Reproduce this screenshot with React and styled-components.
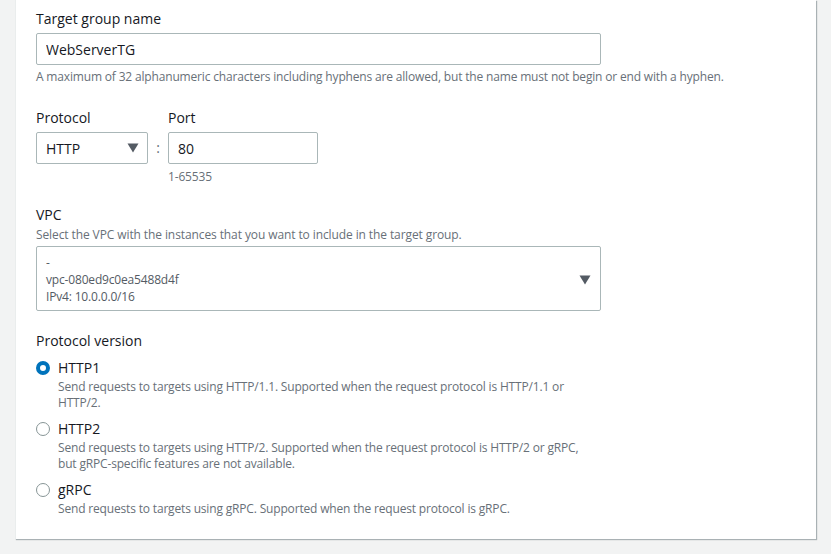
import React, { useState } from 'react'
import styled, { createGlobalStyle } from 'styled-components'

const GlobalStyle = createGlobalStyle`
  html, body {
    margin: 0;
    padding: 0;
    background: #f2f3f3;
    font-family: "Open Sans", "Noto Sans", Arial, sans-serif;
    color: #16191f;
  }
`

const versions = [
  {
    id: 'HTTP1',
    label: 'HTTP1',
    desc: 'Send requests to targets using HTTP/1.1. Supported when the request protocol is HTTP/1.1 or HTTP/2.',
  },
  {
    id: 'HTTP2',
    label: 'HTTP2',
    desc: 'Send requests to targets using HTTP/2. Supported when the request protocol is HTTP/2 or gRPC, but gRPC-specific features are not available.',
  },
  {
    id: 'gRPC',
    label: 'gRPC',
    desc: 'Send requests to targets using gRPC. Supported when the request protocol is gRPC.',
  },
]

function Caret() {
  return (
    <svg width="12" height="10" viewBox="0 0 12 10">
      <path d="M0.5 0.5 L11.5 0.5 L6 9.5 Z" fill="#545b64" />
    </svg>
  )
}

function App() {
  const [version, setVersion] = useState('HTTP1')

  return (
    <>
      <GlobalStyle />
      <Page>
        <Card>
          <Field>
            <Label>Target group name</Label>
            <TextInput wide defaultValue="WebServerTG" />
            <Hint>
              A maximum of 32 alphanumeric characters including hyphens are allowed, but the name must not begin or end with a hyphen.
            </Hint>
          </Field>

          <Row>
            <Field>
              <Label>Protocol</Label>
              <Select>
                <span>HTTP</span>
                <Caret />
              </Select>
            </Field>
            <Colon>:</Colon>
            <Field>
              <Label>Port</Label>
              <TextInput defaultValue="80" width="150px" />
              <SmallHint>1-65535</SmallHint>
            </Field>
          </Row>

          <Field>
            <Label>VPC</Label>
            <Description>Select the VPC with the instances that you want to include in the target group.</Description>
            <VpcSelect>
              <VpcText>
                <VpcLine>-</VpcLine>
                <VpcLine>vpc-080ed9c0ea5488d4f</VpcLine>
                <VpcLine>IPv4: 10.0.0.0/16</VpcLine>
              </VpcText>
              <Caret />
            </VpcSelect>
          </Field>

          <Field>
            <Label>Protocol version</Label>
            <RadioList>
              {versions.map(v => (
                <RadioItem key={v.id} onClick={() => setVersion(v.id)}>
                  <Radio checked={version === v.id} />
                  <RadioBody>
                    <RadioLabel>{v.label}</RadioLabel>
                    <RadioDesc>{v.desc}</RadioDesc>
                  </RadioBody>
                </RadioItem>
              ))}
            </RadioList>
          </Field>
        </Card>
      </Page>
    </>
  )
}

export default App

const Page = styled.div`
  width: 831px;
  height: 554px;
  overflow: hidden;
  padding: 0 15px;
  box-sizing: border-box;
`

const Card = styled.div`
  width: 801px;
  box-sizing: border-box;
  background: #fff;
  border-left: 1px solid #eaeded;
  box-shadow: 1px 1px 1px 0 rgba(0, 28, 36, 0.3);
  padding: 10px 20px 22px 20px;
  display: flex;
  flex-direction: column;
  gap: 21px;
`

const Field = styled.div`
  display: flex;
  flex-direction: column;
`

const Label = styled.div`
  font-size: 14px;
  line-height: 18px;
  margin-bottom: 5px;
`

const TextInput = styled.input`
  width: ${p => (p.wide ? '565px' : p.width || '200px')};
  height: 32px;
  box-sizing: border-box;
  border: 1px solid #aab7b8;
  border-radius: 2px;
  padding: 0 9px;
  font-family: inherit;
  font-size: 14px;
  color: #16191f;
  outline: none;
`

const Hint = styled.div`
  font-size: 12px;
  line-height: 16px;
  letter-spacing: -0.17px;
  color: #687078;
  margin-top: 4px;
`

const SmallHint = styled(Hint)`
  margin-top: 5px;
`

const Row = styled.div`
  display: flex;
  align-items: flex-start;
  margin-top: 3px;
`

const Select = styled.div`
  width: 112px;
  height: 32px;
  box-sizing: border-box;
  border: 1px solid #aab7b8;
  border-radius: 2px;
  padding: 0 8px 0 9px;
  display: flex;
  align-items: center;
  justify-content: space-between;
  font-size: 14px;
`

const Colon = styled.div`
  width: 20px;
  margin-top: 23px;
  text-align: center;
  font-size: 14px;
  line-height: 32px;
  color: #687078;
`

const Description = styled.div`
  font-size: 12px;
  line-height: 16px;
  letter-spacing: -0.1px;
  color: #687078;
  margin: -2px 0 3px;
`

const VpcSelect = styled.div`
  width: 565px;
  box-sizing: border-box;
  border: 1px solid #aab7b8;
  border-radius: 2px;
  padding: 7px 9px 5px 9px;
  display: flex;
  align-items: center;
  justify-content: space-between;
`

const VpcText = styled.div`
  display: flex;
  flex-direction: column;
`

const VpcLine = styled.div`
  font-size: 12px;
  line-height: 17px;
  letter-spacing: -0.17px;
  color: #545b64;
`

const RadioList = styled.div`
  display: flex;
  flex-direction: column;
  gap: 9px;
  margin-top: 4px;
`

const RadioItem = styled.div`
  display: flex;
  align-items: flex-start;
  cursor: pointer;
`

const Radio = styled.span`
  width: 14px;
  height: 14px;
  box-sizing: border-box;
  margin: 2px 8px 0 0;
  border-radius: 50%;
  flex-shrink: 0;
  background: #fff;
  border: ${p => (p.checked ? '4px solid #0073bb' : '1px solid #879596')};
`

const RadioBody = styled.div`
  display: flex;
  flex-direction: column;
`

const RadioLabel = styled.div`
  font-size: 14px;
  line-height: 18px;
`

const RadioDesc = styled.div`
  font-size: 12px;
  line-height: 16px;
  letter-spacing: -0.17px;
  color: #687078;
  max-width: 540px;
  margin-top: 2px;
`
